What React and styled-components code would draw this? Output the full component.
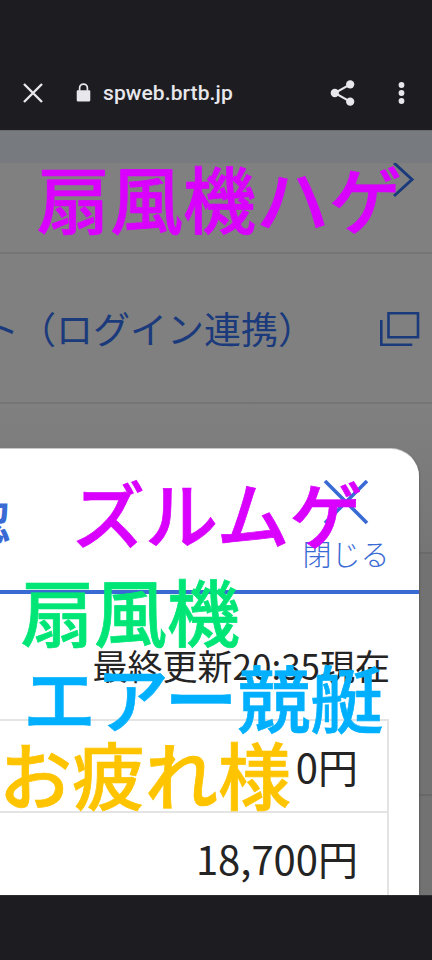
import React from "react";
import styled, { createGlobalStyle } from "styled-components";

const Global = createGlobalStyle`
  html, body { margin: 0; padding: 0; background: #1c1c21; }
  body { font-family: "Noto Sans CJK JP", "Noto Sans", sans-serif; }
`;

const Screen = styled.div`
  position: relative;
  width: 432px;
  height: 960px;
  overflow: hidden;
  display: flex;
  flex-direction: column;
  background: #1c1c21;
`;

const StatusArea = styled.div`
  height: 60px;
  flex: none;
`;

const Toolbar = styled.div`
  height: 70px;
  flex: none;
  box-sizing: border-box;
  padding: 0 27px 5px 21px;
  display: flex;
  align-items: center;
  color: #e8e8ec;
`;

const Url = styled.span`
  font-family: Roboto, sans-serif;
  font-weight: 500;
  font-size: 21px;
  margin-left: 12px;
  flex: 1;
  letter-spacing: 0.1px;
`;

const Page = styled.div`
  flex: 1;
  min-height: 0;
  position: relative;
  background: #808080;
  border-top: 1px solid #6a6d71;
  display: flex;
  flex-direction: column;
`;

const TopStrip = styled.div`
  height: 32px;
  background: #777a7e;
  flex: none;
`;

const MenuRow = styled.div`
  height: ${(p) => p.$h}px;
  flex: none;
  box-sizing: border-box;
  border-bottom: 2px solid #757575;
  display: flex;
  align-items: ${(p) => p.$align || "center"};
  justify-content: flex-end;
  color: #1a3a7c;
  font-size: 37px;
  padding-right: ${(p) => p.$pr || 12}px;
  white-space: nowrap;
  overflow: hidden;
`;

const RowLabel = styled.span`
  margin-right: 65px;
  line-height: 50px;
  flex: none;
`;

const Modal = styled.div`
  position: absolute;
  left: 0;
  top: 318px;
  width: 419px;
  bottom: 0;
  background: #fff;
  border-top-right-radius: 28px;
  box-shadow: 0 -1px 0 #c8c8c8, 1px 0 2px rgba(0, 0, 0, 0.18);
  overflow: hidden;
`;

const Lower = styled.div`
  height: 150px;
  flex: none;
  box-sizing: border-box;
  border-bottom: 2px solid #6a6a6a;
  background: linear-gradient(#808080, #757575);
`;

const Lower2 = styled.div`
  height: 242px;
  flex: none;
  box-sizing: border-box;
  border-bottom: 2px solid #686868;
  background: #727272;
`;

const Backdrop = styled.div`
  flex: 1;
  background: #727272;
`;

const ModalHead = styled.div`
  height: 145px;
  box-sizing: border-box;
  border-bottom: 4px solid #3a6ad4;
  position: relative;
  display: flex;
  justify-content: space-between;
  align-items: flex-start;
`;

const Title = styled.div`
  color: #3a6ad4;
  font-size: 44px;
  font-weight: 700;
  line-height: 54px;
  margin: 45px 0 0 -34px;
`;

const CloseBtn = styled.div`
  width: 90px;
  margin: 30px 28px 0 0;
  display: flex;
  flex-direction: column;
  align-items: center;
  color: #3a6ad4;
`;

const CloseText = styled.span`
  font-size: 29px;
  line-height: 36px;
  font-weight: 300;
  margin-top: 10px;
  white-space: nowrap;
`;

const Updated = styled.div`
  height: 125px;
  box-sizing: border-box;
  text-align: right;
  padding: 49px 29px 0 0;
  font-size: 35px;
  line-height: 44px;
  font-weight: 400;
  color: #242424;
  white-space: nowrap;
`;

const Table = styled.div`
  width: 389px;
  box-sizing: border-box;
  border: 2px solid #e4e4e4;
  border-left: 0;
`;

const Cell = styled.div`
  height: 92px;
  box-sizing: border-box;
  border-bottom: 2px solid #e4e4e4;
  padding: 0 29px 0 0;
  display: flex;
  align-items: center;
  justify-content: flex-end;
  font-size: 40px;
  font-weight: 400;
  color: #242424;
`;

const Sticker = styled.div`
  position: absolute;
  left: ${(p) => p.$x}px;
  top: ${(p) => p.$y}px;
  color: ${(p) => p.$c};
  font-size: 73px;
  font-weight: 500;
  -webkit-text-stroke: 0.7px ${(p) => p.$c};
  line-height: 1;
  white-space: nowrap;
`;

const BottomBar = styled.div`
  height: 65px;
  flex: none;
  background: #1c1c21;
  border-top: 1px solid #2c2c31;
  box-sizing: border-box;
  position: relative;
  z-index: 1;
`;

const Icon = styled.svg`
  display: block;
  flex: none;
`;

const CloseIcon = () => (
  <Icon width="24" height="24" viewBox="0 0 24 24">
    <path d="M3 3L21 21M21 3L3 21" stroke="#e8e8ec" strokeWidth="2.4" fill="none" />
  </Icon>
);

const LockIcon = () => (
  <Icon width="15" height="19" viewBox="0 0 16 21" style={{ marginLeft: 31 }}>
    <path d="M1.5 8h13a1 1 0 0 1 1 1v10a1.5 1.5 0 0 1-1.5 1.5H2A1.5 1.5 0 0 1 .5 19V9a1 1 0 0 1 1-1z" fill="#e8e8ec" />
    <path d="M3.7 8.5V5.5a4.3 4.3 0 0 1 8.6 0v3" fill="none" stroke="#e8e8ec" strokeWidth="1.9" />
  </Icon>
);

const ShareIcon = () => (
  <Icon width="25" height="28" viewBox="0 0 26 28" style={{ marginRight: 43 }}>
    <g fill="#e8e8ec">
      <circle cx="21" cy="5" r="4.3" />
      <circle cx="5" cy="14" r="4.3" />
      <circle cx="21" cy="23" r="4.3" />
    </g>
    <path d="M21 5L5 14L21 23" stroke="#e8e8ec" strokeWidth="2.2" fill="none" />
  </Icon>
);

const MoreIcon = () => (
  <Icon width="7" height="22" viewBox="0 0 7 22">
    <g fill="#e8e8ec">
      <circle cx="3.5" cy="3" r="2.9" />
      <circle cx="3.5" cy="11" r="2.9" />
      <circle cx="3.5" cy="19" r="2.9" />
    </g>
  </Icon>
);

const ChevronIcon = () => (
  <Icon width="24" height="38" viewBox="0 0 24 38" style={{ marginTop: -2 }}>
    <path d="M2 2L20 18.5L2 35" stroke="#1a3a7c" strokeWidth="3" fill="none" />
  </Icon>
);

const CopyIcon = () => (
  <Icon width="40" height="34" viewBox="0 0 40 34" style={{ marginTop: 2 }}>
    <path d="M8.5 1.3h29.5v24h-29.5zM1.3 8v24.7h31" stroke="#1a3a7c" strokeWidth="2.6" fill="none" />
  </Icon>
);

const XIcon = () => (
  <Icon width="46" height="46" viewBox="0 0 46 46">
    <path d="M2 2L44 44M44 2L2 44" stroke="#3a6ad4" strokeWidth="3.6" fill="none" />
  </Icon>
);

export default function App() {
  return (
    <Screen>
      <Global />
      <StatusArea />
      <Toolbar>
        <CloseIcon />
        <LockIcon />
        <Url>spweb.brtb.jp</Url>
        <ShareIcon />
        <MoreIcon />
      </Toolbar>
      <Page>
        <TopStrip />
        <MenuRow $h={91} $pr={16} $align="flex-start">
          <ChevronIcon />
        </MenuRow>
        <MenuRow $h={150} $pr={12}>
          <RowLabel>ト（ログイン連携）</RowLabel>
          <CopyIcon />
        </MenuRow>
        <Lower />
        <Lower2 />
        <Backdrop />
        <Modal>
          <ModalHead>
            <Title>認</Title>
            <CloseBtn>
              <XIcon />
              <CloseText>閉じる</CloseText>
            </CloseBtn>
          </ModalHead>
          <Updated>最終更新20:35現在</Updated>
          <Table>
            <Cell>0円</Cell>
            <Cell>18,700円</Cell>
          </Table>
        </Modal>
      </Page>
      <BottomBar />
      <Sticker $x={37} $y={160} $c="#d900ff">扇風機ハゲ</Sticker>
      <Sticker $x={72} $y={475} $c="#d900ff">ズルムゲ</Sticker>
      <Sticker $x={21} $y={573} $c="#00e676">扇風機</Sticker>
      <Sticker $x={23} $y={659} $c="#00b0ff">エアー競艇</Sticker>
      <Sticker $x={-1} $y={736} $c="#ffc400">お疲れ様</Sticker>
    </Screen>
  );
}
